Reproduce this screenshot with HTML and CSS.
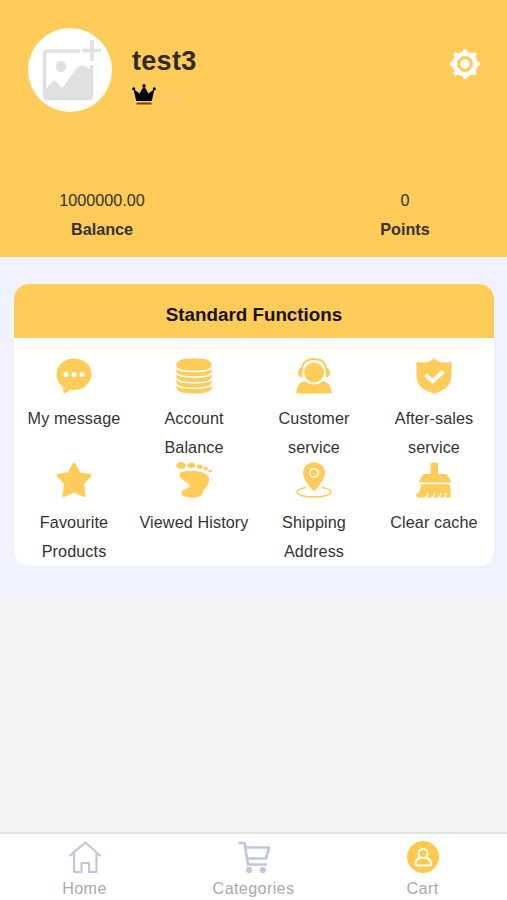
FILE: index.html
```html
<!DOCTYPE html>
<html lang="en">
<head>
<meta charset="utf-8">
<title>Account</title>
<link rel="stylesheet" href="styles.css">
</head>
<body>
<header class="hero">
  <div class="profile">
    <div class="avatar">
      <svg width="84" height="84" viewBox="0 0 84 84">
        <path d="M52 23H20q-3.500 0-3.500 3.500V67q0 3.500 3.500 3.500H60q3.500 0 3.500-3.500V37" fill="none" stroke="#e0e0e0" stroke-width="3.600"/>
        <path d="M17 62L25 53q1-1.500 2.500 0L33 59q1 1 2 0L47 42q7-8 13-2l4 2V70H17z" fill="#e0e0e0"/>
        <ellipse cx="33" cy="38.500" rx="5" ry="5.800" fill="#e0e0e0"/>
        <path d="M64 12V33M54.500 22.500H73" stroke="#e0e0e0" stroke-width="3.600"/>
      </svg>
    </div>
    <div class="who">
      <h1 class="name">test3</h1>
      <div class="level">
        <svg width="24" height="21" viewBox="0 0 24 21">
          <path d="M1.500 5L7.500 9.500 12 2l4.500 7.500L22.500 5 19.800 17h-15.600z"/>
          <circle cx="1.700" cy="4.700" r="1.500"/><circle cx="12" cy="1.800" r="1.700"/><circle cx="22.300" cy="4.700" r="1.500"/>
          <path d="M4.500 18.500h15v2h-15z" fill="#674500"/>
        </svg>
        <span class="level-text">V1</span>
      </div>
    </div>
    <svg class="gear" width="30" height="30" viewBox="0 0 30 30">
      <circle cx="15" cy="15" r="10.300" fill="none" stroke="#fff" stroke-width="4.600"/>
      <path d="M15 2.200V5M15 25V27.800M2.200 15H5M25 15H27.800M6 6L8 8M22 22L24 24M6 24L8 22M22 8L24 6" stroke="#fff" stroke-width="4.600" stroke-linecap="round"/>
      <circle cx="15" cy="15" r="4.700" fill="#fff"/>
    </svg>
  </div>
  <div class="stats">
    <div class="stat"><span>1000000.00</span><b>Balance</b></div>
    <div class="stat"><span>0</span><b>Points</b></div>
  </div>
</header>
<main class="panel">
  <section class="card">
    <h2 class="card-title">Standard Functions</h2>
    <div class="grid">
      <div class="item">
        <svg viewBox="0 0 36 36"><path d="M18 .500C28 .500 35.500 7.500 35.500 16S28 32 18 32q-2 0-4-.300Q11 35 7.500 35.500L7 29Q.500 24 .500 16C.500 7.500 8 .500 18 .500z"/><g fill="#fff"><circle cx="10" cy="16.500" r="2.500"/><circle cx="18" cy="16.500" r="2.500"/><circle cx="26" cy="16.500" r="2.500"/></g></svg>
        <span>My message</span>
      </div>
      <div class="item">
        <svg viewBox="0 0 36 36"><path d="M.500 6.500V29.500Q.500 35.500 18 35.500t17.500-6V6.500Q35.500 .300 18 .300T.500 6.500z"/><path d="M0 9q2 4.500 18 4.500t18-4.500M0 14.600q2 4.500 18 4.500t18-4.500M0 20.200q2 4.500 18 4.500t18-4.500M0 25.800q2 4.500 18 4.500t18-4.500" fill="none" stroke="#fff" stroke-width="1.600"/></svg>
        <span>Account Balance</span>
      </div>
      <div class="item">
        <svg viewBox="0 0 36 36"><circle cx="18" cy="14.500" r="10"/><path d="M5.500 13C6 4.500 11 1 18 1s12 3.500 12.500 12" fill="none" stroke="#ffcb59" stroke-width="2"/><path d="M6.500 9.500Q2 10 2 14.500t4 5zM29.500 9.500Q34 10 34 14.500t-4 5zM8.500 23Q13 26.500 18 26.500T27.500 23Q35.500 25 35.700 35.500H.300Q.500 25 8.500 23z"/></svg>
        <span>Customer service</span>
      </div>
      <div class="item">
        <svg viewBox="0 0 36 36"><path d="M18 .300Q22 4.500 29 4.500L35.500 4V19Q35 28 26 32.500L18 35.700 10 32.500Q1 28 .500 19V4L7 4.500Q14 4.500 18 .300z"/><path d="M9.500 17l7 6L27.500 13.500" fill="none" stroke="#fff" stroke-width="4"/></svg>
        <span>After-sales service</span>
      </div>
      <div class="item">
        <svg viewBox="0 0 36 36"><path d="M18 2L23 11.700 34 13.500 26.500 21.500 28 33.500 18 29 8 33.500 9.500 21.500 2 13.500 13 11.700z" stroke="#ffcb59" stroke-width="3" stroke-linejoin="round"/></svg>
        <span>Favourite Products</span>
      </div>
      <div class="item">
        <svg viewBox="0 0 36 36"><ellipse cx="5" cy="3.600" rx="4.800" ry="3.500"/><ellipse cx="15.300" cy="3.500" rx="4" ry="2.800"/><ellipse cx="23.700" cy="4.700" rx="3.100" ry="2.200" transform="rotate(12 23.700 4.700)"/><ellipse cx="29.600" cy="6.600" rx="2.400" ry="1.800" transform="rotate(15 29.600 6.600)"/><ellipse cx="34.200" cy="9" rx="1.800" ry="1.500"/><path d="M6 9.800Q14 7.800 23 9.500 33 11 33 17.500C33 25 28 25 27 30 26 34.500 22 35.700 15 35.700 9 35.700 5.500 33.500 5.500 31 5.500 27.500 8 28 12 26Q15 24 13 22C10 20 4 17 3.500 13.500Q3.300 10.500 6 9.800z"/></svg>
        <span>Viewed History</span>
      </div>
      <div class="item">
        <svg viewBox="0 0 36 36"><path d="M18 .300c6.500 0 11 5 11 11Q29 18 18 29.500 7 18 7 11.300c0-6 4.500-11 11-11z"/><circle cx="18" cy="11" r="4.300" fill="none" stroke="#fff" stroke-width="1.500"/><path d="M10 25.500Q1 27 1 30c0 6.500 34 6.500 34 0Q35 27 26 25.500" fill="none" stroke="#ffcb59" stroke-width="1.600"/></svg>
        <span>Shipping Address</span>
      </div>
      <div class="item">
        <svg viewBox="0 0 36 36"><path d="M14.500 2q0-1.500 1.500-1.500h4.500q1.500 0 1.500 1.500V12H29q2 0 3 2l3.700 6.500H2.700L6 14q1-2 3-2h5.500zM4.500 22.300H33.500Q35.300 29 34.800 35.500H2Q.300 35.500.300 32 5 31 4.500 22.300z"/><path d="M9.500 36q2-2 2.500-5M16 36q2-2 2.500-5M22.500 36q2-2 2.500-5M28.500 36q1.500-2 1.500-5" fill="none" stroke="#fff" stroke-width="1.400"/></svg>
        <span>Clear cache</span>
      </div>
    </div>
  </section>
</main>
<nav class="tabs">
  <div class="tab">
    <svg viewBox="0 0 32 32" fill="none" stroke="#c0c8d8" stroke-width="2.200" stroke-linejoin="round" stroke-linecap="round"><path d="M1 14.500L16.500 1.500 31 14.500M5 11.500V31h7.500V22h7.500v9H27.500V11.500"/></svg>
    <span>Home</span>
  </div>
  <div class="tab">
    <svg viewBox="0 0 32 32" fill="none" stroke="#c0c8d8" stroke-width="2.700" stroke-linejoin="round" stroke-linecap="round"><path d="M1.500 2H6.500L10 23.500H28M7.300 6.500H31L28 17.500H9"/><g fill="#c0c8d8" stroke="none"><circle cx="11" cy="29" r="3.100"/><circle cx="25" cy="29" r="3.100"/></g></svg>
    <span>Categories</span>
  </div>
  <div class="tab">
    <svg viewBox="0 0 32 32"><circle cx="16" cy="16" r="16" fill="#ffc94f"/><g fill="none" stroke="#fff" stroke-width="2" stroke-linejoin="round"><circle cx="16" cy="12.500" r="4.500"/><path d="M13 16.500Q8.500 18.500 8.500 23q0 1.500 1.500 1.500H22.500q1.500 0 1.500-1.500 0-4.500-5-6.500"/></g></svg>
    <span>Cart</span>
  </div>
</nav>
</body>
</html>
```
FILE: styles.css
```css
* { box-sizing: border-box; }
body {
  margin: 0;
  height: 900px;
  display: flex;
  flex-direction: column;
  background: #f5f5f5;
  color: #333;
  font: 16.200px/29px "Liberation Sans", Arial, sans-serif;
}
svg { display: block; flex: none; }
.hero {
  height: 257px;
  padding-top: 28px;
  background: #ffcb59;
}
.profile {
  display: flex;
  height: 158px;
  padding: 0 27px 0 28px;
}
.avatar {
  width: 84px;
  height: 84px;
  border-radius: 50%;
  background: #fff;
}
.who { flex: 1; padding: 17px 0 0 20px; }
.name {
  margin: 0;
  font-size: 27px;
  line-height: 32px;
  letter-spacing: .3px;
  color: #2d2b28;
}
.level { display: flex; padding-top: 7px; gap: 7px; }
.level-text {
  padding-top: 4px;
  font-size: 15px;
  line-height: 20px;
  font-weight: bold;
  color: #fbc979;
}
.gear { margin-top: 21px; }
.stats { display: flex; justify-content: space-between; }
.stat {
  width: 204px;
  display: flex;
  flex-direction: column;
  align-items: center;
}
.panel {
  height: 343px;
  padding: 27px 13px 0 14px;
  background: #f0f3ff;
}
.card {
  height: 282px;
  border-radius: 15px;
  overflow: hidden;
  background: #fff;
}
.card-title {
  margin: 0;
  height: 54px;
  padding-top: 3px;
  background: #ffcb59;
  color: #17130a;
  font-size: 18.800px;
  line-height: 56px;
  text-align: center;
}
.grid {
  display: grid;
  grid-template-columns: repeat(4, 1fr);
  padding-top: 20px;
}
.item {
  height: 104px;
  padding: 0 4px;
  display: flex;
  flex-direction: column;
  align-items: center;
  gap: 10px;
  text-align: center;
  letter-spacing: .1px;
}
.item svg { width: 36px; height: 36px; fill: #ffcb59; }
.tabs {
  height: 68px;
  margin-top: auto;
  display: flex;
  border-top: 2px solid #e2e3e4;
  background: #fff;
  color: #aaa;
  letter-spacing: .35px;
}
.tab {
  flex: 1;
  padding-top: 7px;
  display: flex;
  flex-direction: column;
  align-items: center;
}
.tab svg { width: 32px; height: 32px; margin-bottom: 1px; }
```
